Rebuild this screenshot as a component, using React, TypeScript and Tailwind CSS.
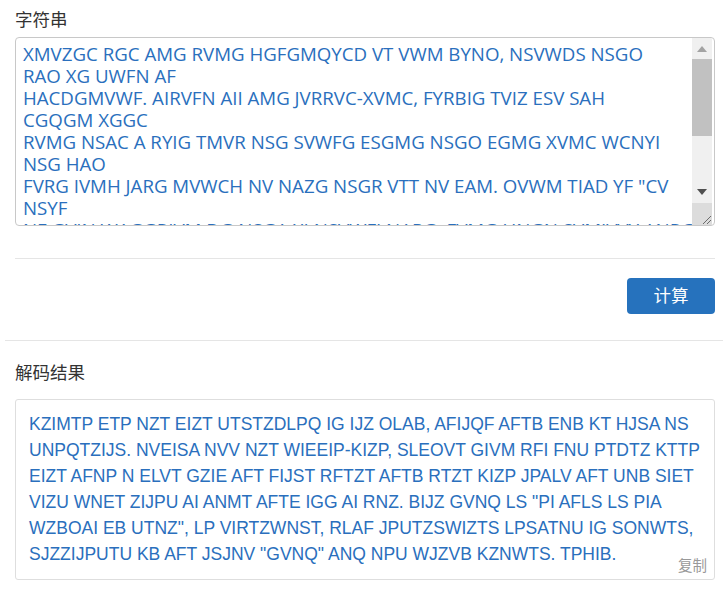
import React from 'react';

const INPUT_TEXT = [
    'XMVZGC RGC AMG RVMG HGFGMQYCD VT VWM BYNO, NSVWDS NSGO',
    'RAO XG UWFN AF',
    'HACDGMVWF. AIRVFN AII AMG JVRRVC-XVMC, FYRBIG TVIZ ESV SAH',
    'CGQGM XGGC',
    'RVMG NSAC A RYIG TMVR NSG SVWFG ESGMG NSGO EGMG XVMC WCNYI',
    'NSG HAO',
    'FVRG IVMH JARG MVWCH NV NAZG NSGR VTT NV EAM. OVWM TIAD YF "CV',
    'NSYF',
    'NF GVIN WAGGRIVM DG NSGA XI NSVWFI NAPG, FVMG UNGN SVMIVVY ANRG',
    'NSG WCNYI.',
].join('\n');

const RESULT_LINES = [
    'KZIMTP ETP NZT EIZT UTSTZDLPQ IG IJZ OLAB, AFIJQF AFTB ENB KT HJSA NS',
    'UNPQTZIJS. NVEISA NVV NZT WIEEIP-KIZP, SLEOVT GIVM RFI FNU PTDTZ KTTP',
    'EIZT AFNP N ELVT GZIE AFT FIJST RFTZT AFTB RTZT KIZP JPALV AFT UNB SIET',
    'VIZU WNET ZIJPU AI ANMT AFTE IGG AI RNZ. BIJZ GVNQ LS "PI AFLS LS PIA',
    'WZBOAI EB UTNZ", LP VIRTZWNST, RLAF JPUTZSWIZTS LPSATNU IG SONWTS,',
    'SJZZIJPUTU KB AFT JSJNV "GVNQ" ANQ NPU WJZVB KZNWTS. TPHIB.',
];

const cjk = "font-['Liberation_Sans','Noto_Sans_CJK_SC',sans-serif]";

const Arrow: React.FC<{ up?: boolean }> = ({ up }) => (
    <svg width="10" height="6" viewBox="0 0 10 6">
        <path d={up ? 'M0 6 L5 0 L10 6 Z' : 'M0 0 L5 6 L10 0 Z'} fill={up ? '#a3a3a3' : '#505050'} />
    </svg>
);

const ScrollBar: React.FC = () => (
    <div className="w-[20px] mr-[2px] flex flex-col bg-[#f0f0f0]">
        <div className="h-[21px] flex items-center justify-center">
            <Arrow up />
        </div>
        <div className="flex-1">
            <div className="h-[77px] bg-[#c1c1c1]" />
        </div>
        <div className="h-[22px] flex items-center justify-center">
            <Arrow />
        </div>
        <div className="h-[22px] bg-[#dcdcdc] flex items-end justify-end">
            <svg width="12" height="12" viewBox="0 0 12 12">
                <path d="M11 3 L3 11 M11 7 L7 11" stroke="#6b6b6b" strokeWidth="1" />
            </svg>
        </div>
    </div>
);

const App: React.FC = () => {
    return (
        <div className={`min-h-screen bg-white px-[5px] pt-[8px] ${cjk}`}>
            {/* Input */}
            <div className="pl-[10px] pr-[8px]">
                <label className="block text-[17.5px] leading-[25px] text-[#333] mb-[4px]">字符串</label>
                <div className="flex h-[189px] border border-[#c8c8c8] rounded-[4px] overflow-hidden">
                    <textarea
                        defaultValue={INPUT_TEXT}
                        wrap="off"
                        className="flex-1 h-full resize-none px-[7px] pt-[5px] pb-0 text-[18.7px] leading-[22px] text-[#2a6fbd] overflow-hidden outline-none font-['Open_Sans',sans-serif]"
                    />
                    <ScrollBar />
                </div>
                <div className="mt-[32px] border-t border-[#e5e5e5]" />
                <div className="flex justify-end mt-[19px]">
                    <button className="w-[88px] h-[36px] rounded-[4px] bg-[#2672bd] text-white text-[17.5px]">
                        计算
                    </button>
                </div>
            </div>

            <div className="mt-[26px] border-t border-[#e5e5e5]" />

            {/* Result */}
            <div className="pl-[10px] pr-[8px] pt-[20px]">
                <div className="text-[17.5px] leading-[25px] text-[#333] mb-[13px]">解码结果</div>
                <div className="relative h-[181px] border border-[#dedede] rounded-[3px] pl-[13px] pt-[11px]">
                    {RESULT_LINES.map((line) => (
                        <div key={line} className="whitespace-pre text-[17.5px] leading-[26px] text-[#2a6fbd]">
                            {line}
                        </div>
                    ))}
                    <span className="absolute right-[7px] bottom-[4px] text-[14.5px] leading-[18px] text-[#999]">复制</span>
                </div>
            </div>
        </div>
    );
};

export default App;
